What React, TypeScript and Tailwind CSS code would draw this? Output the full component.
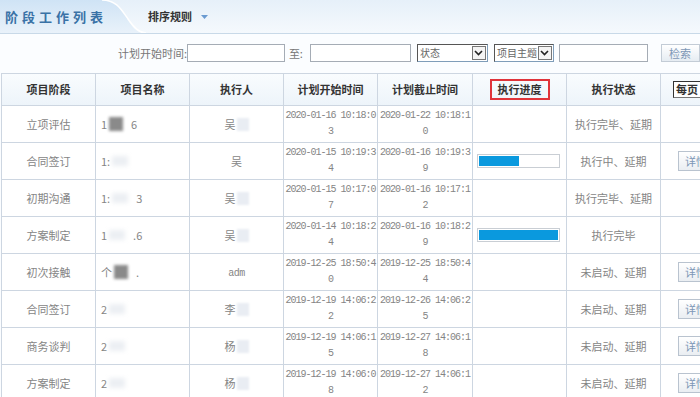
import React from 'react';

const cjk = "font-['Noto_Sans_CJK_SC','Noto_Sans',sans-serif]";

type Row = {
    stage: string;
    nameHead: string;
    nameBlur: 'dark' | 'light';
    nameTail: string;
    person: string;
    personBlur: boolean;
    start: string;
    end: string;
    progress: number | null;
    status: string;
    detail: boolean;
};

const rows: Row[] = [
    { stage: '立项评估', nameHead: '1', nameBlur: 'dark', nameTail: '6', person: '吴', personBlur: true, start: '2020-01-16 10:18:03', end: '2020-01-22 10:18:10', progress: null, status: '执行完毕、延期', detail: false },
    { stage: '合同签订', nameHead: '1:', nameBlur: 'light', nameTail: '', person: '吴', personBlur: false, start: '2020-01-15 10:19:34', end: '2020-01-16 10:19:39', progress: 50, status: '执行中、延期', detail: true },
    { stage: '初期沟通', nameHead: '1:', nameBlur: 'light', nameTail: '3', person: '吴', personBlur: true, start: '2020-01-15 10:17:07', end: '2020-01-16 10:17:12', progress: null, status: '执行完毕、延期', detail: false },
    { stage: '方案制定', nameHead: '1', nameBlur: 'light', nameTail: '.6', person: '吴', personBlur: true, start: '2020-01-14 10:18:24', end: '2020-01-16 10:18:29', progress: 100, status: '执行完毕', detail: false },
    { stage: '初次接触', nameHead: '个', nameBlur: 'dark', nameTail: '.', person: 'adm', personBlur: false, start: '2019-12-25 18:50:40', end: '2019-12-25 18:50:44', progress: null, status: '未启动、延期', detail: true },
    { stage: '合同签订', nameHead: '2', nameBlur: 'light', nameTail: '', person: '李', personBlur: true, start: '2019-12-19 14:06:22', end: '2019-12-26 14:06:25', progress: null, status: '未启动、延期', detail: true },
    { stage: '商务谈判', nameHead: '2', nameBlur: 'light', nameTail: '', person: '杨', personBlur: true, start: '2019-12-19 14:06:15', end: '2019-12-27 14:06:18', progress: null, status: '未启动、延期', detail: true },
    { stage: '方案制定', nameHead: '2', nameBlur: 'light', nameTail: '', person: '杨', personBlur: true, start: '2019-12-19 14:06:08', end: '2019-12-27 14:06:12', progress: null, status: '未启动、延期', detail: true },
];

function DateCell({ value }: { value: string }) {
    return (
        <div className="font-['Liberation_Mono',monospace] text-[10px] leading-[16px] tracking-[-1px] text-[#858585] text-center">
            <div>{value.slice(0, 18)}</div>
            <div>{value.slice(18)}</div>
        </div>
    );
}

function FakeSelect({ label, width }: { label: string; width: string }) {
    return (
        <div className={`${width} h-[18px] flex items-center border border-[#7f9db9] border-t-[#555] border-l-[#555] bg-white`}>
            <span className="flex-1 pl-[2px] text-[10px] text-[#666] leading-none whitespace-nowrap">{label}</span>
            <span className="shrink-0 w-[14px] h-[14px] mr-[1px] border border-[#777] bg-[#f4f4f4] flex items-center justify-center">
                <svg width="9" height="6" viewBox="0 0 9 6">
                    <path d="M1 1 L4.5 4.5 L8 1" fill="none" stroke="#222" strokeWidth="1.6" />
                </svg>
            </span>
        </div>
    );
}

function DetailButton() {
    return (
        <div className="ml-[17px] w-[40px] h-[20px] border border-[#b9c3cf] bg-gradient-to-b from-white to-[#eaeef2] text-[11px] leading-[18px] text-[#7d97b6] pl-[6px]">
            详情
        </div>
    );
}

export default function App() {
    const heads = ['项目阶段', '项目名称', '执行人', '计划开始时间', '计划截止时间', '执行进度', '执行状态'];
    const widths = ['w-[94px]', 'w-[94px]', 'w-[94px]', 'w-[94px]', 'w-[95px]', 'w-[94px]', 'w-[94px]'];

    return (
        <div className={`w-[700px] h-[397px] overflow-hidden bg-[#fbfdff] ${cjk}`}>
            {/* 顶部标签栏 */}
            <div className="relative h-[34px] border-b border-[#c8d9e8] bg-gradient-to-b from-[#e6f0f9] to-[#f5f9fd]">
                <svg className="absolute left-0 top-0" width="160" height="33" viewBox="0 0 160 33">
                    <defs>
                        <linearGradient id="tabg" x1="0" y1="0" x2="0" y2="1">
                            <stop offset="0" stopColor="#cfe3f5" />
                            <stop offset="1" stopColor="#e9f2fa" />
                        </linearGradient>
                    </defs>
                    <path d="M0 0 H102 C116 0 121 9 128 19 C134 28 139 33 146 33 H0 Z" fill="url(#tabg)" />
                    <path d="M102 0 C116 0 121 9 128 19 C134 28 139 33 146 33" fill="none" stroke="#ffffff" strokeWidth="1.5" />
                </svg>
                <div className="relative flex items-center h-full">
                    <span className="pl-[5px] w-[148px] text-[13px] font-bold tracking-[4px] text-[#3a72a6]">阶段工作列表</span>
                    <span className="text-[11px] font-bold text-[#333]">排序规则</span>
                    <svg className="ml-[9px]" width="7" height="4" viewBox="0 0 7 4">
                        <path d="M0 0 H7 L3.5 4 Z" fill="#6b9bd1" />
                    </svg>
                </div>
            </div>

            {/* 筛选栏 */}
            <div className="flex items-center h-[18px] mt-[10px] mb-[11px] pl-[118px] text-[11px] text-[#777] whitespace-nowrap">
                <span className="w-[71px]">计划开始时间:</span>
                <div className="w-[101px] h-[18px] border border-[#a5acb5] bg-white" />
                <span className="ml-[4px] w-[22px]">至:</span>
                <div className="w-[104px] h-[18px] border border-[#a5acb5] bg-white" />
                <div className="ml-[6px]"><FakeSelect label="状态" width="w-[71px]" /></div>
                <div className="ml-[6px]"><FakeSelect label="项目主题" width="w-[60px]" /></div>
                <div className="ml-[5px] w-[92px] h-[18px] border border-[#a5acb5] bg-white" />
                <div className="ml-[13px] w-[40px] h-[18px] border border-[#c3ccd6] bg-gradient-to-b from-white to-[#e6ecf2] text-[#7d97b6] pl-[7px] leading-[16px]">检索</div>
            </div>

            {/* 列表 */}
            <div className="pl-[1px]">
                <table className="table-fixed border-collapse w-[760px]">
                    <thead>
                        <tr className="h-[32px] bg-gradient-to-b from-[#f9fcfe] to-[#edf4fa]">
                            {heads.map((h, i) => (
                                <th key={h} className={`${widths[i]} border border-[#cdd6e1] text-[11px] font-bold text-[#333] text-center p-0`}>
                                    {h === '执行进度' ? (
                                        <span className="inline-block border-2 border-[#e0343a] px-[6px] leading-[17px]">{h}</span>
                                    ) : h}
                                </th>
                            ))}
                            <th className="border border-[#cdd6e1] p-0 text-left">
                                <div className="ml-[12px] w-[60px] h-[17px] border border-[#777] border-t-[#333] border-l-[#333] bg-white text-[11px] font-bold text-[#333] pl-[2px] leading-[15px]">每页</div>
                            </th>
                        </tr>
                    </thead>
                    <tbody>
                        {rows.map((r, idx) => (
                            <tr key={idx} className="h-[37px] bg-white">
                                <td className="border border-[#cdd6e1] text-center text-[11px] text-[#858585] p-0">{r.stage}</td>
                                <td className="border border-[#cdd6e1] text-[11px] text-[#858585] p-0 pl-[5px]">
                                    <span className="inline-flex items-center">
                                        <span>{r.nameHead}</span>
                                        {r.nameBlur === 'dark' ? (
                                            <span className="w-[14px] h-[14px] bg-[#8a8a8a] blur-[1.5px] mx-[2px]" />
                                        ) : (
                                            <span className="w-[16px] h-[10px] bg-[#eceff3] blur-[2px] mx-[2px]" />
                                        )}
                                        <span className="ml-[6px]">{r.nameTail}</span>
                                    </span>
                                </td>
                                <td className="border border-[#cdd6e1] text-center text-[11px] text-[#858585] p-0">
                                    <span className="inline-flex items-center">
                                        <span className={r.person === 'adm' ? "font-['Liberation_Mono',monospace] text-[10px] tracking-[-0.5px]" : ''}>{r.person}</span>
                                        {r.personBlur && <span className="w-[12px] h-[13px] bg-[#e9edf3] blur-[1px] ml-[1px]" />}
                                    </span>
                                </td>
                                <td className="border border-[#cdd6e1] p-0"><DateCell value={r.start} /></td>
                                <td className="border border-[#cdd6e1] p-0"><DateCell value={r.end} /></td>
                                <td className="border border-[#cdd6e1] p-0">
                                    {r.progress !== null && (
                                        <div className="ml-[4px] w-[83px] h-[14px] border border-[#c9ced4] bg-white p-[1px]">
                                            <div className="h-full bg-[#0a99de]" style={{ width: `${r.progress}%` }} />
                                        </div>
                                    )}
                                </td>
                                <td className="border border-[#cdd6e1] text-center text-[11px] text-[#858585] p-0">{r.status}</td>
                                <td className="border border-[#cdd6e1] p-0">{r.detail && <DetailButton />}</td>
                            </tr>
                        ))}
                    </tbody>
                </table>
            </div>
        </div>
    );
}
